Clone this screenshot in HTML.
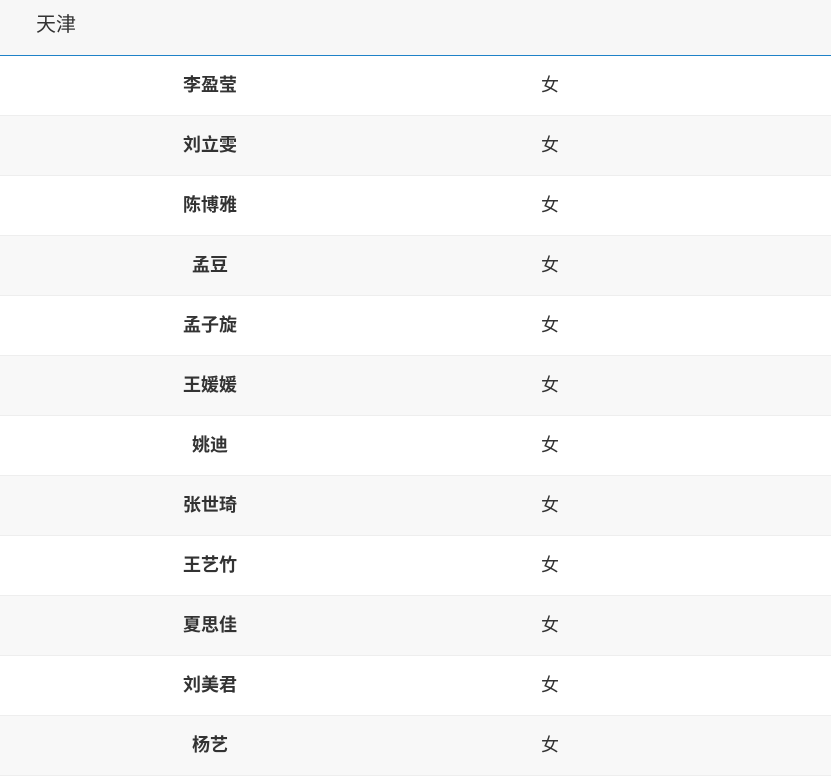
<!DOCTYPE html>
<html><head><meta charset="utf-8"><style>
*{margin:0;padding:0;box-sizing:border-box}
body{width:831px;height:776px;background:#fff;font-family:"Liberation Sans","Noto Sans CJK SC",sans-serif;color:#333;overflow:hidden}
.hd{height:56px;background:#f7f7f7;border-bottom:1px solid #1f82c8;font-size:20px;line-height:50px;padding-left:36px;color:#333}
.r{height:60px;display:flex;border-bottom:1px solid #eeeeee;font-size:18px;align-items:center;padding-bottom:4px}
.n{width:420px;text-align:center;font-weight:bold}
.g{width:260px;text-align:center}
</style></head><body>
<div class="hd">天津</div>
<div id="t">
<div class="r" style="background:#fff"><div class="n">李盈莹</div><div class="g">女</div></div>
<div class="r" style="background:#f8f8f8"><div class="n">刘立雯</div><div class="g">女</div></div>
<div class="r" style="background:#fff"><div class="n">陈博雅</div><div class="g">女</div></div>
<div class="r" style="background:#f8f8f8"><div class="n">孟豆</div><div class="g">女</div></div>
<div class="r" style="background:#fff"><div class="n">孟子旋</div><div class="g">女</div></div>
<div class="r" style="background:#f8f8f8"><div class="n">王媛媛</div><div class="g">女</div></div>
<div class="r" style="background:#fff"><div class="n">姚迪</div><div class="g">女</div></div>
<div class="r" style="background:#f8f8f8"><div class="n">张世琦</div><div class="g">女</div></div>
<div class="r" style="background:#fff"><div class="n">王艺竹</div><div class="g">女</div></div>
<div class="r" style="background:#f8f8f8"><div class="n">夏思佳</div><div class="g">女</div></div>
<div class="r" style="background:#fff"><div class="n">刘美君</div><div class="g">女</div></div>
<div class="r" style="background:#f8f8f8"><div class="n">杨艺</div><div class="g">女</div></div>
</div>
</body></html>
